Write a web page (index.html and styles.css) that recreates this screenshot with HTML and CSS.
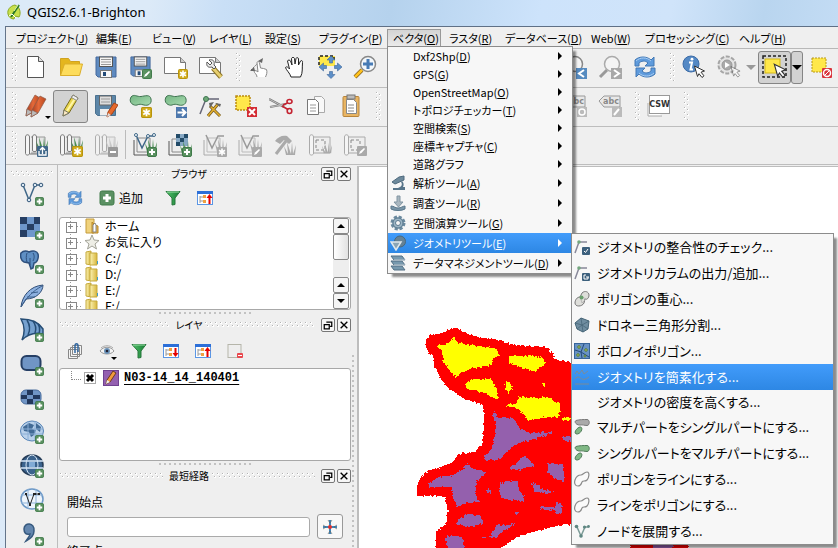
FILE: index.html
```html
<!DOCTYPE html>
<html lang="ja">
<head>
<meta charset="utf-8">
<title>QGIS2.6.1-Brighton</title>
<link rel="stylesheet" href="styles.css">
</head>
<body>
<svg class="sprite" aria-hidden="true">
  <defs>
    <linearGradient id="g-pencil" x1="0" y1="0" x2="1" y2="0"><stop offset="0" stop-color="#a2391d"/><stop offset=".5" stop-color="#e4693a"/><stop offset="1" stop-color="#b8481f"/></linearGradient>
    <linearGradient id="g-green" x1="0" y1="0" x2="1" y2="1"><stop offset="0" stop-color="#73b582"/><stop offset="1" stop-color="#a8dbb0"/></linearGradient>
    <linearGradient id="g-folder" x1="0" y1="0" x2="1" y2="0"><stop offset="0" stop-color="#fbf3b4"/><stop offset="1" stop-color="#d8b63c"/></linearGradient>
    <linearGradient id="g-funnel" x1="0" y1="0" x2="1" y2="0"><stop offset="0" stop-color="#54c46c"/><stop offset="1" stop-color="#147a32"/></linearGradient>

    <symbol id="b-plus" viewBox="0 0 10 10"><rect x=".5" y=".5" width="9" height="9" rx="1.5" fill="#5a9160" stroke="#3f7a49"/><path d="M5 2v6M2 5h6" stroke="#fff" stroke-width="2"/></symbol>
    <symbol id="b-star" viewBox="0 0 10 10"><rect x=".5" y=".5" width="9" height="9" rx="1" fill="#d2ac1c" stroke="#b8940c"/><path d="M5 1.500v7M2 3.200l6 3.600M8 3.200L2 6.800" stroke="#fff" stroke-width="1.600"/></symbol>
    <symbol id="b-star-off" viewBox="0 0 10 10"><rect width="10" height="10" rx="1" fill="#aaa"/><path d="M5 1.500v7M2 3.200l6 3.600M8 3.200L2 6.800" stroke="#fff" stroke-width="1.600"/></symbol>
    <symbol id="b-edit" viewBox="0 0 10 10"><rect x=".5" y=".5" width="9" height="9" rx="1" fill="#5a9160" stroke="#437c4c"/><path d="M2 8l1-2.500L7 2l1 1-3.500 4z" fill="#fff"/></symbol>
    <symbol id="b-edit-off" viewBox="0 0 10 10"><rect width="10" height="10" rx="1" fill="#aaa"/><path d="M2 8l1-2.500L7 2l1 1-3.500 4z" fill="#fff"/></symbol>
    <symbol id="b-minus-off" viewBox="0 0 10 10"><rect width="10" height="10" rx="1" fill="#999"/><path d="M2 5h6" stroke="#fff" stroke-width="2"/></symbol>
    <symbol id="cursor" viewBox="0 0 12 14"><path d="M1 1l10 5-3.500 1.200 3 3.600-2 1.700-3-3.800L4 11.500z" fill="#fff" stroke="#333"/></symbol>

    <symbol id="logo" viewBox="0 0 16 16"><path d="M9 1C4 2 1 6 2 10c.5 3 3 5 6 5l1-3 4 1c2-3 1-8-1-10z" fill="#c8e04c" stroke="#8caa20"/><path d="M13 1L5 13" stroke="#287828" stroke-width="2"/><path d="M12 1L8 7" stroke="#e8f8a0"/><path d="M3 12l3-2 4 4" stroke="#fff" fill="none"/></symbol>
    <symbol id="new" viewBox="0 0 24 24"><path d="M3.500 1.500h11l5 5v16h-16z" fill="#fff" stroke="#555"/><path d="M14.500 1.500v5h5" fill="#ddd" stroke="#555"/></symbol>
    <symbol id="open" viewBox="0 0 24 24"><path d="M1.500 20.500v-17h8l2 3h9v4" fill="#e4b61e" stroke="#d0a320"/><path d="M1.500 20.500l4-11.500h18l-3 11.500z" fill="#fddc5c" stroke="#dbae2a"/></symbol>
    <symbol id="save" viewBox="0 0 24 24"><path d="M2 2h20v20H4l-2-2z" fill="#5e8ac0" stroke="#45699c"/><rect x="5.500" y="2" width="13" height="9.500" fill="#f4f4f4" stroke="#555"/><path d="M7 4.500h10M7 7h10M7 9.500h10" stroke="#999"/><rect x="6.500" y="15.500" width="11" height="7" fill="#f7f7f7" stroke="#777"/><rect x="9" y="17" width="3" height="4" fill="#234b78"/></symbol>
    <symbol id="save-as" viewBox="0 0 24 24"><use href="#save" width="23" height="23"/><use href="#b-edit" x="13" y="14" width="10" height="10"/></symbol>
    <symbol id="composer" viewBox="0 0 24 24"><path d="M.5 2.500h16l5 5v11H.5z" fill="#fff" stroke="#777"/><path d="M16.500 2.500v5h5" fill="#ccc" stroke="#777"/><use href="#b-star" x="14" y="14" width="10" height="10"/></symbol>
    <symbol id="manager" viewBox="0 0 24 24"><path d="M.5 2.500h16l5 5v11H.5z" fill="#fff" stroke="#777"/><path d="M16.500 2.500v5h5" fill="#ccc" stroke="#777"/><path d="M14 13l8 9" stroke="#8a7326" stroke-width="5"/><path d="M14 13l8 9" stroke="#e7cf6f" stroke-width="3"/><path d="M8 7c-1 4 1 6 5 5l2 2 2-2-2-2c1-4-1-6-5-5l3 3-2 2z" fill="#e9e9e9" stroke="#555"/></symbol>
    <symbol id="touch" viewBox="0 0 24 24"><path d="M3 15L13 5" stroke="#777" stroke-dasharray="2 1"/><path d="M9 22c0-3-3-4-3-6 1-1 3 0 4 1L9 8c0-2 2-2 2.500 0l1 5 3 .5 3 1c1 3 0 5-1 7.500" fill="#fff" stroke="#888"/><path d="M10 6l5-3-1 5zM6 12l-4 4 5 0z" fill="#666"/></symbol>
    <symbol id="hand" viewBox="0 0 24 24"><path d="M8 22C7 18 3 15 2.500 12.500c1-1.500 3 0 4 1.500L4.500 6C5 4.500 7 5 7.500 6L9 10 8.500 3.500c.5-1.500 2.500-1.500 3 0L12 9l1-5.500c.5-1.500 2.500-1 2.500.5L15.500 10l2-4c1-1 2.500 0 2 1.500C19 12 20 18 17.500 22z" fill="#fff" stroke="#222"/></symbol>
    <symbol id="pan-select" viewBox="0 0 24 24"><path d="M1 1h16v10H1z" fill="#ffe84a"/><path d="M1 10V1h15v4" fill="none" stroke="#222" stroke-width="1.500" stroke-dasharray="3 2"/><path d="M13 1l4 4h-2.500v3h-3V5H9zM13 23.500l-4-4h2.500v-3h3v3H17zM24 12l-4.500 4v-2.500h-3v-3h3V8zM1 12l4.500-4v2.500h3v3h-3V16z" fill="#5c8fc8" stroke="#3d679a" stroke-width=".6"/></symbol>
    <symbol id="zoom-in" viewBox="0 0 24 24"><path d="M9 15l-7 7" stroke="#806020" stroke-width="4"/><path d="M9 15l-7 7" stroke="#ffc21c" stroke-width="2.500"/><circle cx="15" cy="9" r="7.500" fill="#f2f7fb" stroke="#888" stroke-width="1.500"/><path d="M15 4v10M10 9h10" stroke="#477bb5" stroke-width="3"/></symbol>
    <symbol id="zoom-last" viewBox="0 0 24 24"><circle cx="12" cy="9" r="7.500" fill="#f4f4f4" stroke="#888" stroke-width="1.500"/><path d="M13 13h11v11H13z" fill="#568bc0"/><path d="M21 15l-5 3.500 5 3.500" fill="none" stroke="#fff" stroke-width="2"/></symbol>
    <symbol id="zoom-next" viewBox="0 0 24 24"><path d="M9 15l-7 7" stroke="#999" stroke-width="3"/><circle cx="14" cy="9" r="7.500" fill="#f4f4f4" stroke="#aaa" stroke-width="1.500"/><path d="M13 13h11v11H13z" fill="#a8a8a8"/><path d="M16 15l5 3.500-5 3.500" fill="none" stroke="#fff" stroke-width="2"/></symbol>
    <symbol id="refresh" viewBox="0 0 24 24"><path d="M2 11V5c4-4 12-4 16 0l3-3v9h-9l3-3C12 5 8 6 6 8v3zM22 13v6c-4 4-12 4-16 0l-3 3v-9h9l-3 3c3 3 7 2 9 0v-3z" fill="#5f9bdc" stroke="#4278b5"/><path d="M3 6c4-4 11-4 15 0M21 18c-4 4-11 4-15 0" fill="none" stroke="#a9cdf2"/></symbol>
    <symbol id="identify" viewBox="0 0 24 24"><circle cx="9" cy="9" r="8" fill="#5489c5" stroke="#3c6ca7"/><path d="M7 7.500h3l-1.500 7H11" fill="none" stroke="#fff" stroke-width="2"/><circle cx="10" cy="4.200" r="1.400" fill="#fff"/><use href="#cursor" x="11" y="10" width="13" height="14"/></symbol>
    <symbol id="action" viewBox="0 0 24 24"><circle cx="10" cy="10" r="8.500" fill="#e4e4e4" stroke="#a5a5a5" stroke-width="2" stroke-dasharray="4 1.500"/><circle cx="10" cy="10" r="5" fill="#aaa" stroke="#999"/><path d="M8 7l5 3-5 3z" fill="#fff"/><g opacity=".5"><use href="#cursor" x="13" y="10" width="11" height="14"/></g></symbol>
    <symbol id="select" viewBox="0 0 26 24"><rect x="1" y="1" width="23" height="21" fill="none" stroke="#222" stroke-width="1.500" stroke-dasharray="3 2"/><rect x="3" y="4" width="15" height="14" fill="#ffe84a" stroke="#d4b818"/><use href="#cursor" x="10" y="8" width="16" height="16"/></symbol>
    <symbol id="deselect" viewBox="0 0 24 24"><rect x="3" y="3" width="14" height="14" fill="#ffe84a" stroke="#b79716" stroke-dasharray="2 1"/><rect x="13" y="13" width="10" height="10" rx="1" fill="#d9343c"/><circle cx="18" cy="18" r="3.500" fill="none" stroke="#fff" stroke-width="1.500"/><path d="M16 20l4-4" stroke="#fff"/></symbol>

    <symbol id="pencil-y" viewBox="0 0 24 24"><path d="M4 22l1-6L14 1l5 3-9 15z" fill="#e9d54d" stroke="#776b1c"/><path d="M8 17l9-14" stroke="#fff6a8" stroke-width="2"/><path d="M4 22l1-6 5 3z" fill="#fbe9c0" stroke="#776"/><path d="M14 1l5 3-1.500 2.500-5-3z" fill="#eee" stroke="#888"/></symbol>
    <symbol id="pencils" viewBox="0 0 24 24"><g stroke="#8d5a48" stroke-width=".7"><path d="M2 22l1-7L11 1l5 3-7 14z" fill="url(#g-pencil)"/><path d="M2 22l1-7 6 3z" fill="#bbb"/><path d="M7 23l1-7L16 2l6 3-8 14z" fill="url(#g-pencil)"/><path d="M7 23l1-7 6 3z" fill="#bbb"/></g></symbol>
    <symbol id="save-edit" viewBox="0 0 24 24"><path d="M1.500 1.500h20v20h-18l-2-2z" fill="#5c86a8" stroke="#4c7290"/><rect x="5.500" y="2" width="12" height="9" fill="#ddd" stroke="#666"/><path d="M7 5h9M7 8h9" stroke="#999"/><rect x="6" y="15" width="9" height="6.500" fill="#eee"/><path d="M13 23l1-5 6-9 4 2-6 9z" fill="#e76a2c" stroke="#a6441a"/><path d="M13 23l1-4 3 2z" fill="#ddd"/></symbol>
    <symbol id="blob" viewBox="0 0 24 24"><path d="M2 3C5-.5 8 3 12 2.500S21 0 22 5s-3 7-7 6-4-1-7 0S-1 9 2 3z" fill="url(#g-green)" stroke="#3f7350"/></symbol>
    <symbol id="add-feature" viewBox="0 0 24 24"><use href="#blob" width="24" height="24"/><use href="#b-star" x="12" y="13" width="11" height="11"/></symbol>
    <symbol id="move-feature" viewBox="0 0 24 24"><use href="#blob" width="24" height="24"/><rect x="12" y="13" width="11" height="11" fill="#4d78ad"/><path d="M13.500 18.500H21M18 15l3.500 3.500L18 22" fill="none" stroke="#fff" stroke-width="2"/></symbol>
    <symbol id="node" viewBox="0 0 24 24"><path d="M1 20L7 5h13" fill="none" stroke="#667" stroke-width="1.500"/><circle cx="7" cy="5" r="2.500" fill="#6fa878" stroke="#3d7550"/><path d="M9 22L19 10M21 22L11 12" stroke="#735a25" stroke-width="3"/><path d="M9 22L19 10M21 22L11 12" stroke="#e4b02d" stroke-width="1.500"/><path d="M10 9l5-1-4 6zM16 9l6 1-1 3z" fill="#666"/></symbol>
    <symbol id="delete" viewBox="0 0 24 24"><rect x="2" y="2" width="14" height="14" fill="#ffe84a" stroke="#bb8b10" stroke-width="1.500" stroke-dasharray="2 1"/><rect x="13" y="13" width="10" height="10" fill="#d42c34"/><path d="M15 15l6 6M21 15l-6 6" stroke="#fff" stroke-width="2"/></symbol>
    <symbol id="cut" viewBox="0 0 24 24"><path d="M0 5l15 8M1 13l16-3" stroke="#777" stroke-width="2"/><path d="M0 5l15 8M1 13l16-3" stroke="#ddd" stroke-width=".7"/><g fill="none" stroke="#c42331" stroke-width="1.600"><ellipse cx="20.500" cy="7.500" rx="2.500" ry="2"/><ellipse cx="20.500" cy="17" rx="2.300" ry="2.500"/><path d="M13 12l6 3.500M14 11l4.500-2"/></g></symbol>
    <symbol id="copy" viewBox="0 0 24 24"><path d="M10.500 2.500h7l3 3v13h-10z" fill="#f8f8f8" stroke="#aaa"/><path d="M3.500 5.500h8l3 3v12h-11z" fill="#fff" stroke="#777"/><path d="M6 11h6M6 14h6M6 17h6" stroke="#999"/></symbol>
    <symbol id="paste" viewBox="0 0 24 24"><rect x="4" y="2.500" width="16" height="20" rx="1" fill="#e8b564" stroke="#b8843a"/><path d="M7.500 5.500h7l3 3v11h-10z" fill="#fff" stroke="#888"/><path d="M9 11h6M9 14h6M9 17h6" stroke="#888"/><rect x="8" y="1" width="8" height="4" fill="#bbb" stroke="#777"/></symbol>
    <symbol id="tag" viewBox="0 0 24 24"><path d="M1 7l5-5h16v11H6z" fill="#e8e8e8" stroke="#999"/><rect x="14" y="13" width="10" height="10" fill="#bbb"/></symbol>

    <symbol id="roll" viewBox="0 0 24 24"><path d="M7 4h14v16H7" fill="#e5e5e5" stroke="#999"/><path d="M1.500 4c0-3 4-3 4 0v17c-2 2-4 1-4-1zM8.500 4c0-3 4-3 4 0v14c-2 1-4 1-4-1z" fill="#f5f5f5" stroke="#777"/><path d="M5.500 21h14" stroke="#777"/></symbol>
    <symbol id="grass" viewBox="0 0 12 14"><path d="M2 14L0 5l4 8L3 1l4 12 1-12 1 12 3-9-1 10z" fill="#498b52"/></symbol>
    <symbol id="grass-off" viewBox="0 0 12 14"><path d="M2 14L0 5l4 8L3 1l4 12 1-12 1 12 3-9-1 10z" fill="#aaa"/></symbol>
    <symbol id="map-open" viewBox="0 0 24 24"><use href="#roll" width="24" height="24"/><use href="#grass" x="12" y="3" width="12" height="14"/><rect x="13" y="13" width="11" height="11" rx="1" fill="#3f6789"/><path d="M15 18v4h7v-4M18.500 21v-6M16 17l2.500-2.500L21 17" fill="none" stroke="#fff" stroke-width="1.300"/></symbol>
    <symbol id="map-new" viewBox="0 0 24 24"><use href="#roll" width="24" height="24"/><use href="#grass" x="12" y="3" width="12" height="14"/><use href="#b-star" x="13" y="13" width="11" height="11"/></symbol>
    <symbol id="map-close" viewBox="0 0 24 24"><g opacity=".55"><use href="#roll" width="24" height="24"/><use href="#grass-off" x="12" y="3" width="12" height="14"/></g><use href="#b-minus-off" x="14" y="14" width="10" height="10"/></symbol>
    <symbol id="grass-vector" viewBox="0 0 24 24"><path d="M4 5h13v14H4z" fill="#eee" stroke="#888"/><path d="M1 7v15h14" fill="none" stroke="#555"/><path d="M3 2l6 13 6-12h6" fill="none" stroke="#3f6788" stroke-width="1.500"/><g fill="#fff" stroke="#3f6788"><circle cx="3" cy="2" r="1.500"/><circle cx="15" cy="3" r="1.500"/><circle cx="21" cy="2" r="1.500"/></g><use href="#grass" x="12" y="5" width="12" height="14"/><use href="#b-plus" x="14" y="14" width="10" height="10"/></symbol>
    <symbol id="grass-raster" viewBox="0 0 24 24"><path d="M4 6h13v13H4z" fill="#eee" stroke="#888"/><path d="M1 8v14h14" fill="none" stroke="#555"/><path d="M8 1h12v12H8z" fill="#86a8c4"/><path d="M8 1h4v4H8zM12 5h4v4h-4zM16 1h4v4h-4zM8 9h4v4H8z" fill="#234b68"/><use href="#grass" x="12" y="7" width="12" height="14"/><use href="#b-plus" x="14" y="14" width="10" height="10"/></symbol>
    <symbol id="grass-vec-off" viewBox="0 0 24 24"><path d="M4 5h13v14H4z" fill="#eee" stroke="#bbb"/><path d="M1 7v15h14" fill="none" stroke="#aaa"/><path d="M3 2l6 13 6-12h6" fill="none" stroke="#999" stroke-width="1.500"/><use href="#grass-off" x="12" y="5" width="12" height="14"/></symbol>
    <symbol id="grass-new-off" viewBox="0 0 24 24"><use href="#grass-vec-off" width="24" height="24"/><use href="#b-star-off" x="14" y="14" width="10" height="10"/></symbol>
    <symbol id="grass-edit-off" viewBox="0 0 24 24"><use href="#grass-vec-off" width="24" height="24"/><use href="#b-edit-off" x="14" y="14" width="10" height="10"/></symbol>
    <symbol id="tools-off" viewBox="0 0 24 24"><path d="M3 21L13 8" stroke="#aaa" stroke-width="3"/><path d="M2 8c3-4 7-6 12-5l5 5-3 3-5-4-4 4z" fill="#aaa"/><use href="#grass-off" x="11" y="7" width="12" height="16"/></symbol>
    <symbol id="region-off" viewBox="0 0 24 24"><path d="M5 4h17v16H5" fill="#eee" stroke="#aaa"/><path d="M1.500 4c0-3 4-3 4 0v17c-2 2-4 1-4-1z" fill="#f5f5f5" stroke="#aaa"/><path d="M8 7h9v10H8z" fill="none" stroke="#888" stroke-dasharray="3 2"/></symbol>
    <symbol id="region-view" viewBox="0 0 24 24"><use href="#region-off" width="24" height="24"/><use href="#grass-off" x="14" y="7" width="10" height="15"/></symbol>
    <symbol id="region-edit" viewBox="0 0 24 24"><use href="#region-off" width="24" height="24"/><use href="#b-edit-off" x="14" y="13" width="10" height="10"/></symbol>

    <symbol id="l-vector" viewBox="0 0 24 24"><path d="M3 3l6 15 6-15h7" fill="none" stroke="#3f6788" stroke-width="1.500"/><g fill="#dbe8f2" stroke="#34587a"><circle cx="3" cy="3" r="1.800"/><circle cx="9" cy="18" r="1.800"/><circle cx="15" cy="3" r="1.800"/><circle cx="21" cy="3" r="1.800"/></g><use href="#b-plus" x="15" y="15" width="9" height="9"/></symbol>
    <symbol id="l-raster" viewBox="0 0 24 24"><path d="M0 1h20v20H0z" fill="#6e97cb"/><path d="M0 1h7v7H0zM14 1h6v7h-6zM7 8h7v6H7zM0 14h7v7H0z" fill="#263e63"/><use href="#b-plus" x="15" y="15" width="9" height="9"/></symbol>
    <symbol id="l-postgis" viewBox="0 0 24 24"><path d="M1 3c3-3 6-2 8-1 4-2 8-1 9 2 1 4-1 9-4 9l-1 5-2 1-2-6-5-1C1 11 0 6 1 3z" fill="#5f8fc4" stroke="#2d4f7d" stroke-width="1.500"/><path d="M7 3c-1 3-1 6 0 9M13 3c2 3 1 6 0 8M10 8v7" fill="none" stroke="#2d4f7d"/><use href="#b-plus" x="15" y="15" width="9" height="9"/></symbol>
    <symbol id="l-spatialite" viewBox="0 0 24 24"><path d="M1 23C2 12 10 2 23 1c0 7-7 14-17 14z" fill="#8cb0df" stroke="#314e76"/><path d="M1 23C7 13 13 7 22 2M7 13l8 0M11 9l7-1" stroke="#3c608d" fill="none"/><use href="#b-plus" x="15" y="15" width="9" height="9"/></symbol>
    <symbol id="l-mssql" viewBox="0 0 24 24"><path d="M1 1c9 0 17 2 22 10v5c-8-2-15 0-21 6C5 15 5 8 1 1z" fill="#76a1cf" stroke="#264d75" stroke-width="1.500"/><path d="M7 2c3 5 3 11 1 15M13 3c3 4 3 9 2 12M18 6c2 3 2 6 1 9" fill="none" stroke="#264d75" stroke-width="1.500"/><use href="#b-plus" x="15" y="15" width="9" height="9"/></symbol>
    <symbol id="l-oracle" viewBox="0 0 24 24"><rect x="1.500" y="4" width="19" height="14" rx="5" fill="#7095c5" stroke="#263f65" stroke-width="2"/><use href="#b-plus" x="15" y="15" width="9" height="9"/></symbol>
    <symbol id="l-georaster" viewBox="0 0 24 24"><rect x="1" y="4" width="20" height="14" rx="5" fill="#7095c5" stroke="#496c9c"/><path d="M7 4h6v5H7zM1 9h6v4H1zM13 9h7v4h-7zM7 13h6v5H7z" fill="#22385c"/><use href="#b-plus" x="15" y="15" width="9" height="9"/></symbol>
    <symbol id="l-wms" viewBox="0 0 24 24"><ellipse cx="12" cy="11" rx="11.500" ry="10" fill="#b9d1eb" stroke="#5683b5"/><path d="M3 7l6-4 5 2-2 4 4 1-2 5-3 2-2-5-5-1zM16 3l5 4-1 5-4-3z" fill="#426b96"/><path d="M1 9h22M1 14h22M8 1v20M15 1v20" stroke="#8aaed5"/><use href="#b-plus" x="15" y="15" width="9" height="9"/></symbol>
    <symbol id="l-wcs" viewBox="0 0 24 24"><ellipse cx="12" cy="11" rx="11" ry="10" fill="#3b638d" stroke="#263d58" stroke-width="1.500"/><path d="M1 7h22M1 14h22" stroke="#d7e7f7" stroke-width="1.500"/><ellipse cx="12" cy="11" rx="6" ry="10" fill="none" stroke="#d7e7f7"/><path d="M9 8h6v5H9z" fill="#80aad5"/><use href="#b-plus" x="15" y="15" width="9" height="9"/></symbol>
    <symbol id="l-wfs" viewBox="0 0 24 24"><ellipse cx="12" cy="11" rx="11" ry="10" fill="#eef5fc" stroke="#6c98c6" stroke-width="1.500"/><path d="M1 7h22M1 15h22M8 1v20M16 1v20" stroke="#8eb2d8"/><path d="M6 6l4 11 4-11h5" fill="none" stroke="#222"/><path d="M5 5h2v2H5zM13 5h3v2h-3zM18 5h2v2h-2zM9 16h2v2H9z" fill="#222"/><use href="#b-plus" x="15" y="15" width="9" height="9"/></symbol>
    <symbol id="l-csv" viewBox="0 0 24 24"><path d="M4 7c0-7 11-7 10 2 0 5-4 8-8 10 2-3 4-5 4-7-4 1-6-1-6-5z" fill="#6386ae" stroke="#36597e" stroke-width="1.500"/><use href="#b-plus" x="15" y="15" width="9" height="9"/></symbol>

    <symbol id="add" viewBox="0 0 16 16"><rect x="1" y="1" width="14" height="14" rx="2" fill="#5b9163" stroke="#417a4b"/><path d="M8 4v8M4 8h8" stroke="#fff" stroke-width="3"/></symbol>
    <symbol id="funnel" viewBox="0 0 16 16"><path d="M1 1.500h14L10 8v6.500L7 15V8z" fill="url(#g-funnel)" stroke="#28763c"/><path d="M2 2h12" stroke="#9ae0a8"/></symbol>
    <symbol id="collapse" viewBox="0 0 16 16"><rect x=".5" y="1.500" width="15" height="13" fill="#fff" stroke="#5b96e4"/><path d="M0 1h16v3H0z" fill="#2c6fd8"/><path d="M3 6v7M3 7h3M3 11h3" stroke="#999"/><path d="M6 5h3v3H6zM6 10h3v3H6z" fill="#f0a040"/><path d="M12.500 4l3 4h-2v6h-2V8h-2z" fill="#e60000"/></symbol>
    <symbol id="expand" viewBox="0 0 16 16"><rect x=".5" y="1.500" width="15" height="13" fill="#fff" stroke="#5b96e4"/><path d="M0 1h16v3H0z" fill="#2c6fd8"/><path d="M3 6v7M3 7h3M3 11h3" stroke="#999"/><path d="M6 5h3v3H6zM6 10h3v3H6z" fill="#f0a040"/><path d="M12.500 14l3-4h-2V5h-2v5h-2z" fill="#e60000"/></symbol>
    <symbol id="group" viewBox="0 0 16 16"><path d="M5.500 2.500h9v9h-9zM3.500 4.500h9v9h-9zM1.500 6.500h9v9h-9z" fill="#f3f3f3" stroke="#888"/><path d="M8 10V3c0-3 3-3 3 0v6" fill="none" stroke="#3267a0" stroke-width="1.500"/></symbol>
    <symbol id="eye" viewBox="0 0 16 16"><path d="M1 8c3-5 11-5 14 0-3 4-11 4-14 0z" fill="#f4f4f4" stroke="#999"/><circle cx="8" cy="8" r="3" fill="#6a92b8"/><circle cx="8" cy="8" r="1.300" fill="#223"/><path d="M2 5c3-3 9-3 12 0" fill="none" stroke="#aaa"/></symbol>
    <symbol id="remove" viewBox="0 0 16 16"><rect x="1" y="1.500" width="13" height="13" fill="#eee" stroke="#b5b5aa"/><rect x="10" y="10" width="6" height="5" rx="1" fill="#e8484e"/><path d="M11 12.500h4" stroke="#fff"/></symbol>
    <symbol id="home" viewBox="0 0 16 16"><path d="M2 1h8v14H2z" fill="#f0d27c" stroke="#c49b3a"/><path d="M8 15V4l3 3 3 1v7z" fill="#e3b048" stroke="#b98a2a"/><path d="M9 14V7l2-2 1 2v7z" fill="#fff" stroke="#888"/></symbol>
    <symbol id="star" viewBox="0 0 16 16"><path d="M8 1l2 5 5 .5-4 3.500 1.500 5L8 12l-4.500 3L5 10 1 6.500 6 6z" fill="#eeeee6" stroke="#a3a398"/></symbol>
    <symbol id="folder" viewBox="0 0 16 16"><path d="M2 2l5-1v14l-5-1z" fill="url(#g-folder)" stroke="#c5a93c"/><path d="M6 3h7v12H6z" fill="url(#g-folder)" stroke="#c5a93c"/><path d="M13 11h1v3h-1z" fill="#3d9cc8"/></symbol>
    <symbol id="layer-edit" viewBox="0 0 16 16"><rect x=".5" y=".5" width="15" height="15" fill="#9460b0" stroke="#6f4290"/><path d="M3 14l1-4 6-9 3 2-6 9z" fill="#f19b3c" stroke="#6d3b20"/><path d="M3 14l1-4 3 2z" fill="#eee"/></symbol>
    <symbol id="capture" viewBox="0 0 16 16"><path d="M8 1v14M1 8h14" stroke="#3d87bb" stroke-width="2"/><path d="M6 1l2 3 2-3M6 15l2-3 2 3M1 6l3 2-3 2M15 6l-3 2 3 2" fill="none" stroke="#666" stroke-width=".7"/><circle cx="8" cy="8" r="2" fill="#e03030"/></symbol>
    <symbol id="float" viewBox="0 0 12 12"><path d="M4.500 2.500h6v5h-2M4 2.500h7" fill="none" stroke="#000" stroke-width="1.500"/><path d="M1.500 5.500h6v5h-6zM1 5.500h7" fill="none" stroke="#000" stroke-width="1.500"/></symbol>
    <symbol id="close" viewBox="0 0 12 12"><path d="M2 2l8 8M10 2l-8 8" stroke="#000" stroke-width="1.600"/></symbol>
    <symbol id="check" viewBox="0 0 12 12"><path d="M3 3l6 6M9 3l-6 6" stroke="#000" stroke-width="3"/></symbol>

    <symbol id="m-analysis" viewBox="0 0 16 16"><path d="M9 2l5-1v4L5 9 2 7z" fill="#6e8a9c" stroke="#4e6a7e"/><path d="M11 7c2 3 0 5-3 6H3v2h12v-3h-2c1-2 1-4-1-6z" fill="#58758a"/></symbol>
    <symbol id="m-research" viewBox="0 0 16 16"><path d="M7 1h3v6h3l-4.500 5L4 7h3z" fill="#a9b7c0" stroke="#8296a3"/><path d="M1 11c3 0 4 2 7 2s5-2 7-2v3c-3 2-11 2-14 0z" fill="#7a96a8" stroke="#5a788c"/></symbol>
    <symbol id="m-gear" viewBox="0 0 16 16"><circle cx="8" cy="8" r="6" fill="#9db6c5" stroke="#6b8a9f" stroke-width="3" stroke-dasharray="3 1.700"/><circle cx="8" cy="8" r="5" fill="#9db6c5" stroke="#5b7a90"/><circle cx="8" cy="8" r="2.500" fill="#f7f7f7" stroke="#5b7a90"/></symbol>
    <symbol id="m-geometry" viewBox="0 0 16 16"><circle cx="10" cy="6.500" r="5.500" fill="#658295" stroke="#48687e"/><path d="M1 7h10l-5 8z" fill="#8ba5b5" stroke="#e1e8ec" stroke-width="1.500"/></symbol>
    <symbol id="m-data" viewBox="0 0 16 16"><path d="M1 1h11l3 4H4zM1 6h11l3 4H4zM1 11h11l3 4H4z" fill="#7799ae" stroke="#526f84"/><path d="M4 5h11M4 10h11" stroke="#cbd7df"/></symbol>
    <symbol id="s-check" viewBox="0 0 16 16"><path d="M1 14L5 3h8" fill="none" stroke="#889" stroke-width="1.500"/><circle cx="5" cy="3" r="1.800" fill="#74a77e"/><rect x="8" y="8" width="8" height="8" rx="1" fill="#3c607d"/><path d="M10 12l1.500 1.500L14 10" fill="none" stroke="#fff"/></symbol>
    <symbol id="s-export" viewBox="0 0 16 16"><path d="M1 14L5 3h8" fill="none" stroke="#889" stroke-width="1.500"/><circle cx="5" cy="3" r="1.800" fill="#74a77e"/><rect x="8" y="8" width="8" height="8" rx="1" fill="#3c607d"/><path d="M12 10h-2v4h4v-2M12 12h3" fill="none" stroke="#fff"/></symbol>
    <symbol id="s-centroid" viewBox="0 0 16 16"><path d="M8 2c3-3 7-1 7 2s-2 5-4 4l-1 4c-2 4-9 4-9 0 0-3 2-6 5-6z" fill="#dededa" stroke="#777"/><path d="M6 5l6 3-4 4z" fill="none" stroke="#aaa" stroke-width=".7"/><circle cx="7.500" cy="6.500" r="2" fill="#69a06d"/></symbol>
    <symbol id="s-delaunay" viewBox="0 0 16 16"><path d="M1 6l6-5 8 3-1 8-5 3-6-3z" fill="#6f8da0" stroke="#456476"/><path d="M8 8L7 1M8 8l7-4M8 8l6 4M8 8l1 7M8 8l-5 4M8 8L1 6" stroke="#476679" stroke-width=".8"/></symbol>
    <symbol id="s-voronoi" viewBox="0 0 16 16"><rect x=".5" y=".5" width="15" height="15" fill="#6892c4" stroke="#37659a"/><path d="M1 7l6 2 3-8M7 9l1 6M7 9l8 5" fill="none" stroke="#234a7c"/><g fill="#b1cf73" stroke="#597c35"><circle cx="5" cy="4" r="1.300"/><circle cx="12" cy="7" r="1.300"/><circle cx="4" cy="12" r="1.300"/><circle cx="11" cy="13" r="1"/></g></symbol>
    <symbol id="s-simplify" viewBox="0 0 16 16"><path d="M1 5l2-3 2 3 3-4 2 4 4-3M1 10c3-4 5-1 7 0s4 0 7-2M1 15h14" fill="none" stroke="#7b8b98"/></symbol>
    <symbol id="s-multi" viewBox="0 0 16 16"><path d="M2 1.500c3-1 8-1 11-1s3 6 0 6-4-1-7-.5S-.5 3 2 1.500z" fill="#aaa" stroke="#777"/><path d="M6 8c4 0 1 7-3 7S2 9 6 8z" fill="#80b885" stroke="#507a59"/></symbol>
    <symbol id="s-single" viewBox="0 0 16 16"><path d="M2 1.500c3-1 8-1 11-1s3 6 0 6-4-1-7-.5S-.5 3 2 1.500z" fill="#80b885" stroke="#507a59"/><path d="M6 8c4 0 1 7-3 7S2 9 6 8z" fill="#80b885" stroke="#507a59"/></symbol>
    <symbol id="s-line" viewBox="0 0 16 16"><path d="M7 4c2 0 3-3 6-3s2 6 0 8-4 0-5 2-1 4-4 4-4-3-3-6 3-5 6-5z" fill="#fafafa" stroke="#8a8a8a" stroke-width="1.200"/></symbol>
    <symbol id="s-nodes" viewBox="0 0 16 16"><path d="M3 4l4 9 4-9h3" fill="none" stroke="#7b9a96" stroke-width="1.500"/><g fill="#5f8782"><circle cx="2.500" cy="3.500" r="1.800"/><circle cx="7" cy="13" r="1.800"/><circle cx="10.500" cy="4" r="1.600"/><circle cx="14.500" cy="3.500" r="1.400"/></g></symbol>
  </defs>
</svg>

<div class="desktop">
  <header class="titlebar"><svg class="icon16"><use href="#logo"/></svg><span>QGIS2.6.1-Brighton</span></header>
  <div class="window">
    <nav class="menubar">
      <button>プロジェクト(<u>J</u>)</button><button>編集(<u>E</u>)</button><button>ビュー(<u>V</u>)</button><button>レイヤ(<u>L</u>)</button><button>設定(<u>S</u>)</button><button>プラグイン(<u>P</u>)</button><button class="open">ベクタ(<u>O</u>)</button><button>ラスタ(<u>R</u>)</button><button>データベース(<u>D</u>)</button><button>Web(<u>W</u>)</button><button>プロセッシング(<u>C</u>)</button><button>ヘルプ(<u>H</u>)</button>
    </nav>

    <div class="toolrow">
      <div class="toolbar"><i class="grip"></i>
        <button class="tool" aria-label="新規"><svg><use href="#new"/></svg></button>
        <button class="tool" aria-label="開く"><svg><use href="#open"/></svg></button>
        <button class="tool" aria-label="保存"><svg><use href="#save"/></svg></button>
        <button class="tool" aria-label="別名で保存"><svg><use href="#save-as"/></svg></button>
        <button class="tool" aria-label="新規コンポーザ"><svg><use href="#composer"/></svg></button>
        <button class="tool" aria-label="コンポーザマネージャ"><svg><use href="#manager"/></svg></button>
      </div>
      <div class="toolbar"><i class="grip"></i>
        <button class="tool" aria-label="タッチズーム"><svg><use href="#touch"/></svg></button>
        <button class="tool" aria-label="パン"><svg><use href="#hand"/></svg></button>
        <button class="tool" aria-label="選択部分にパン"><svg><use href="#pan-select"/></svg></button>
        <button class="tool" aria-label="拡大"><svg><use href="#zoom-in"/></svg></button>
        <span class="covered"></span>
        <button class="tool" aria-label="直前の表示"><svg><use href="#zoom-last"/></svg></button>
        <button class="tool" aria-label="次の表示"><svg><use href="#zoom-next"/></svg></button>
        <button class="tool" aria-label="再読み込み"><svg><use href="#refresh"/></svg></button>
      </div>
      <div class="toolbar"><i class="grip"></i>
        <button class="tool" aria-label="地物情報"><svg><use href="#identify"/></svg></button>
        <button class="tool" aria-label="アクション"><svg><use href="#action"/></svg></button>
        <button class="arrow off" aria-label="アクション一覧"></button>
        <button class="tool pressed select-tool" aria-label="地物選択"><svg class="wide"><use href="#select"/></svg></button>
        <button class="arrow pressed" aria-label="選択方法"></button>
        <button class="tool" aria-label="選択解除"><svg><use href="#deselect"/></svg></button>
      </div>
    </div>

    <div class="toolrow">
      <div class="toolbar"><i class="grip"></i>
        <button class="tool more" aria-label="現在の編集"><svg><use href="#pencils"/></svg></button>
        <button class="tool pressed" aria-label="編集モード"><svg><use href="#pencil-y"/></svg></button>
        <button class="tool" aria-label="編集の保存"><svg><use href="#save-edit"/></svg></button>
        <button class="tool" aria-label="地物追加"><svg><use href="#add-feature"/></svg></button>
        <button class="tool" aria-label="地物移動"><svg><use href="#move-feature"/></svg></button>
        <button class="tool" aria-label="ノードツール"><svg><use href="#node"/></svg></button>
        <button class="tool" aria-label="選択物の削除"><svg><use href="#delete"/></svg></button>
        <button class="tool" aria-label="切り取り"><svg><use href="#cut"/></svg></button>
        <button class="tool" aria-label="コピー"><svg><use href="#copy"/></svg></button>
        <button class="tool" aria-label="貼り付け"><svg><use href="#paste"/></svg></button>
      </div>
      <div class="toolbar"><i class="grip"></i><span class="covered"></span>
        <button class="tool" aria-label="ラベル回転"><svg><use href="#tag"/><text class="tag-text" x="5" y="10">abc</text><circle cx="19" cy="18" r="3" fill="none" stroke="#fff" stroke-width="1.500"/></svg></button>
        <button class="tool" aria-label="ラベル変更"><svg><use href="#tag"/><text class="tag-text" x="5" y="10">abc</text><path d="M16 21l5-6" stroke="#fff" stroke-width="2"/></svg></button>
      </div>
      <div class="toolbar"><i class="grip"></i>
        <button class="tool" aria-label="CSW"><svg><path d="M1 9v13h14" fill="#fff" stroke="#aaa"/><rect x="2.500" y="1.500" width="20" height="18" fill="#fff" stroke="#999"/><text class="csw-text" x="12.500" y="13">CSW</text></svg></button>
      </div>
      <div class="toolbar"><i class="grip"></i></div>
    </div>

    <div class="toolrow grass">
      <div class="toolbar"><i class="grip"></i>
        <button class="tool" aria-label="マップセットを開く"><svg><use href="#map-open"/></svg></button>
        <button class="tool" aria-label="新規マップセット"><svg><use href="#map-new"/></svg></button>
        <button class="tool" aria-label="マップセットを閉じる"><svg><use href="#map-close"/></svg></button>
      </div>
      <div class="toolbar split">
        <button class="tool" aria-label="GRASSベクタ追加"><svg><use href="#grass-vector"/></svg></button>
        <button class="tool" aria-label="GRASSラスタ追加"><svg><use href="#grass-raster"/></svg></button>
        <button class="tool" aria-label="GRASSベクタ作成"><svg><use href="#grass-new-off"/></svg></button>
        <button class="tool" aria-label="GRASSベクタ編集"><svg><use href="#grass-edit-off"/></svg></button>
        <button class="tool" aria-label="GRASSツール"><svg><use href="#tools-off"/></svg></button>
        <button class="tool" aria-label="領域表示"><svg><use href="#region-view"/></svg></button>
        <button class="tool" aria-label="領域編集"><svg><use href="#region-edit"/></svg></button>
      </div>
    </div>

    <div class="main">
      <aside class="layerbar"><i class="hgrip"></i>
        <button aria-label="ベクタレイヤ追加"><svg><use href="#l-vector"/></svg></button>
        <button aria-label="ラスタレイヤ追加"><svg><use href="#l-raster"/></svg></button>
        <button aria-label="PostGISレイヤ追加"><svg><use href="#l-postgis"/></svg></button>
        <button aria-label="SpatiaLiteレイヤ追加"><svg><use href="#l-spatialite"/></svg></button>
        <button aria-label="MSSQLレイヤ追加"><svg><use href="#l-mssql"/></svg></button>
        <button aria-label="Oracleレイヤ追加"><svg><use href="#l-oracle"/></svg></button>
        <button aria-label="GeoRasterレイヤ追加"><svg><use href="#l-georaster"/></svg></button>
        <button aria-label="WMSレイヤ追加"><svg><use href="#l-wms"/></svg></button>
        <button aria-label="WCSレイヤ追加"><svg><use href="#l-wcs"/></svg></button>
        <button aria-label="WFSレイヤ追加"><svg><use href="#l-wfs"/></svg></button>
        <button aria-label="テキストレイヤ追加"><svg><use href="#l-csv"/></svg></button>
      </aside>

      <div class="docks">
        <section>
          <h2><i class="hgrip"></i>ブラウザ<i class="hgrip"></i><button aria-label="切り離す"><svg><use href="#float"/></svg></button><button aria-label="閉じる"><svg><use href="#close"/></svg></button></h2>
          <div class="docktools browser-tools">
            <button aria-label="再読み込み"><svg class="icon16"><use href="#refresh"/></svg></button>
            <button class="add"><svg class="icon16"><use href="#add"/></svg>追加</button>
            <button aria-label="フィルタ"><svg class="icon16"><use href="#funnel"/></svg></button>
            <button aria-label="全てたたむ"><svg class="icon16"><use href="#collapse"/></svg></button>
          </div>
          <div class="box tree">
            <ul>
              <li><i class="knob"></i><svg class="icon16"><use href="#home"/></svg>ホーム</li>
              <li><i class="knob"></i><svg class="icon16"><use href="#star"/></svg>お気に入り</li>
              <li><i class="knob"></i><svg class="icon16"><use href="#folder"/></svg>C:/</li>
              <li><i class="knob"></i><svg class="icon16"><use href="#folder"/></svg>D:/</li>
              <li><i class="knob"></i><svg class="icon16"><use href="#folder"/></svg>E:/</li>
              <li><i class="knob"></i><svg class="icon16"><use href="#folder"/></svg>F:/</li>
            </ul>
            <div class="scroll"><button class="up" aria-label="上へ"></button><span class="thumb"></span><span class="track"></span><button class="up" aria-label="上へ"></button><button class="down" aria-label="下へ"></button></div>
          </div>
        </section>
        <i class="splitter"></i>
        <section>
          <h2><i class="hgrip"></i>レイヤ<i class="hgrip"></i><button aria-label="切り離す"><svg><use href="#float"/></svg></button><button aria-label="閉じる"><svg><use href="#close"/></svg></button></h2>
          <div class="docktools layer-tools">
            <button aria-label="グループ追加"><svg class="icon16"><use href="#group"/></svg></button>
            <button class="more" aria-label="表示管理"><svg class="icon16"><use href="#eye"/></svg></button>
            <button aria-label="フィルタ"><svg class="icon16"><use href="#funnel"/></svg></button>
            <button aria-label="全て展開"><svg class="icon16"><use href="#expand"/></svg></button>
            <button aria-label="全てたたむ"><svg class="icon16"><use href="#collapse"/></svg></button>
            <button aria-label="削除"><svg class="icon16"><use href="#remove"/></svg></button>
          </div>
          <div class="box layers">
            <div class="layer"><i class="branch"></i><span class="tick"><input type="checkbox" id="layer1" checked><svg><use href="#check"/></svg></span><svg class="icon16"><use href="#layer-edit"/></svg><label for="layer1">N03-14_14_140401</label></div>
          </div>
        </section>
        <i class="splitter"></i>
        <section class="route">
          <h2><i class="hgrip"></i>最短経路<i class="hgrip"></i><button aria-label="切り離す"><svg><use href="#float"/></svg></button><button aria-label="閉じる"><svg><use href="#close"/></svg></button></h2>
          <div class="form">
            <label for="start">開始点</label>
            <div class="field"><input type="text" id="start"><button aria-label="開始点を指定"><svg class="icon16"><use href="#capture"/></svg></button></div>
            <span>終了点</span>
          </div>
        </section>
      </div>
      <i class="vsplitter"></i>
      <main class="map">
        <svg viewBox="359 167 479 381" role="img" aria-label="地図" shape-rendering="crispEdges">
          <filter id="rough" x="0" y="0" width="1" height="1"><feTurbulence type="fractalNoise" baseFrequency=".15" numOctaves="2" seed="4"/><feDisplacementMap in="SourceGraphic" scale="12" xChannelSelector="R" yChannelSelector="G"/></filter>
          <g transform="translate(400 310) scale(.33333)" filter="url(#rough)">
            <path fill="#f00" d="M78 88L90 75 125 70 145 60 170 52 185 62 210 75 240 82 300 90 325 100 370 108 430 110 450 120 468 150 515 157 620 170V630L515 643 470 648 430 658 390 668 350 683 300 714 240 760H108V668L140 640 143 600 135 560 52 557V525L63 500 90 480 125 470 160 455 175 432 225 425 245 405 252 360 250 285 190 265 150 240 125 210 105 170 100 140 80 125zM690 680H865V760H690z"/>
            <path fill="#ff0" d="M108 108L148 98 160 84 175 98 215 105 285 115 300 135 275 150V165L215 175 180 190 168 202 150 185 130 155 125 120zM327 137L425 140 437 158 432 168 415 172 408 185 365 172 327 158zM195 222L215 208 275 206 280 222 292 237 293 270 250 248 200 237zM317 210L340 228 325 250 316 240zM320 283H350L355 260 400 265 455 260 462 275 480 278 478 320 440 320 385 332 365 305 345 292 320 288zM427 220L437 225 430 232zM485 323L540 328V334L485 329z"/>
            <path fill="#9460ad" d="M275 310L290 303 292 320 340 325 360 355 385 368 460 367 430 380 395 390 365 395 330 415 300 448 255 452 250 440 270 425 282 395 288 340zM87 520L120 500 155 497 185 480 200 460 220 475 260 487 230 515 228 565 243 575 200 580 172 590 160 565 155 530 87 530zM325 476L350 460 372 437 390 450 405 470 380 472 360 480zM300 520L330 513 352 512 358 540 372 560 370 575 330 568 305 565 298 540zM442 457L465 462 492 462V513L470 508 445 490zM392 517L420 528 425 538 465 545 440 550 405 545zM420 589L465 591 470 580 487 578V612H470L465 600 422 598zM167 643L180 625 205 612 240 615 252 640 210 650zM228 685L270 680 290 645 345 643 315 660 290 683zM135 685L150 677 180 680 193 692 190 730H145zM488 385L500 375 525 385 500 398zM255 543L270 530 273 548zM342 608L360 604 350 614zM758 680H818V760H758z"/>
          </g>
        </svg>
      </main>
    </div>
  </div>

  <ul class="menu vector-menu">
    <li><button>Dxf2Shp(<u>D</u>)</button></li>
    <li><button>GPS(<u>G</u>)</button></li>
    <li><button>OpenStreetMap(<u>O</u>)</button></li>
    <li><button>トポロジチェッカー(<u>T</u>)</button></li>
    <li><button>空間検索(<u>S</u>)</button></li>
    <li><button>座標キャプチャ(<u>C</u>)</button></li>
    <li><button>道路グラフ</button></li>
    <li class="tall"><button><svg class="icon16"><use href="#m-analysis"/></svg>解析ツール(<u>A</u>)</button></li>
    <li class="tall"><button><svg class="icon16"><use href="#m-research"/></svg>調査ツール(<u>R</u>)</button></li>
    <li class="tall"><button><svg class="icon16"><use href="#m-gear"/></svg>空間演算ツール(<u>G</u>)</button></li>
    <li class="tall"><button class="active"><svg class="icon16"><use href="#m-geometry"/></svg>ジオメトリツール(<u>E</u>)</button></li>
    <li class="tall"><button><svg class="icon16"><use href="#m-data"/></svg>データマネジメントツール(<u>D</u>)</button></li>
  </ul>

  <ul class="menu submenu">
    <li><button><svg class="icon16"><use href="#s-check"/></svg>ジオメトリの整合性のチェック...</button></li>
    <li><button><svg class="icon16"><use href="#s-export"/></svg>ジオメトリカラムの出力/追加...</button></li>
    <li><button><svg class="icon16"><use href="#s-centroid"/></svg>ポリゴンの重心...</button></li>
    <li><button><svg class="icon16"><use href="#s-delaunay"/></svg>ドロネー三角形分割...</button></li>
    <li><button><svg class="icon16"><use href="#s-voronoi"/></svg>ボロノイポリゴン...</button></li>
    <li><button class="active"><svg class="icon16"><use href="#s-simplify"/></svg>ジオメトリを簡素化する...</button></li>
    <li class="plain"><button>ジオメトリの密度を高くする...</button></li>
    <li><button><svg class="icon16"><use href="#s-multi"/></svg>マルチパートをシングルパートにする...</button></li>
    <li><button><svg class="icon16"><use href="#s-single"/></svg>シングルパートをマルチパートにする...</button></li>
    <li><button><svg class="icon16"><use href="#s-line"/></svg>ポリゴンをラインにする...</button></li>
    <li><button><svg class="icon16"><use href="#s-line"/></svg>ラインをポリゴンにする...</button></li>
    <li><button><svg class="icon16"><use href="#s-nodes"/></svg>ノードを展開する...</button></li>
  </ul>
</div>
</body>
</html>
```
FILE: styles.css
```css
* { box-sizing: border-box; }
body {
  margin: 0;
  font: 12px/16px "Noto Sans CJK JP", "Noto Sans", sans-serif;
  font-feature-settings: "palt";
  color: #000;
}
button {
  margin: 0; padding: 0; border: 0; background: none;
  font: inherit; font-feature-settings: inherit; color: inherit; white-space: nowrap;
}
ul { list-style: none; margin: 0; padding: 0; }
svg { flex: none; display: block; }
u { text-underline-offset: 1px; }
.sprite { position: absolute; width: 0; height: 0; }
.icon16 { width: 16px; height: 16px; }

.desktop {
  position: relative; height: 100vh; overflow: hidden;
  display: flex; flex-direction: column;
  background: linear-gradient(100deg, #dceaf8 0, #dceaf8 16%, #c9dff6 24%, #b5d2ed 42%, #cde3fb 58%, #d0e4fa 72%, #b9d5ef 82%, #cfe4fa 100%);
}
.titlebar {
  flex: none; height: 26px; padding: 0 6px 2px;
  display: flex; align-items: center; gap: 5px;
  font: 13px/18px "Noto Sans", sans-serif;
}
.window {
  flex: 1; min-height: 0; margin-left: 5px;
  display: flex; flex-direction: column;
  border-top: 1px solid #5f7086; border-left: 1px solid #64758a;
  background: #efefef;
}

.menubar {
  flex: none; height: 22px; padding: 0 0 0 2px;
  display: grid; justify-content: start; align-items: end;
  grid-template-columns: 80px 56px 57px 56px 54px 76px 54px 56px 86px 54px 94px 60px;
  border-bottom: 1px solid #b8b8b8;
  font-size: 11px;
}
.menubar button { text-align: left; padding: 0 0 2px 7px; height: 19px; border: 1px solid transparent; }
.menubar .open { padding-left: 5px; border-color: #999; background: linear-gradient(#d4d4d4, #ececec); }

.toolrow {
  flex: none; height: 39px; display: flex; gap: 2px;
  padding-bottom: 2px;
  border-bottom: 1px solid #bdbdbd; overflow: hidden;
}
.toolrow.grass { height: 38px; }
.toolbar { display: flex; align-items: center; }
.grip {
  width: 6px; height: 28px; margin-left: 6px;
  background-image:
    conic-gradient(at 1px 1px, transparent 75%, #b4b4b4 0),
    conic-gradient(at 2px 2px, transparent 75%, #fff 0),
    conic-gradient(at 1px 1px, transparent 75%, #b4b4b4 0),
    conic-gradient(at 2px 2px, transparent 75%, #fff 0);
  background-size: 6px 5px;
  background-position: 0 0, 0 0, 3px 2px, 3px 2px;
}
.tool {
  position: relative; width: 35px; height: 33px;
  display: flex; align-items: center; justify-content: center;
}
.tool svg, .layerbar svg { width: 24px; height: 24px; }
.tool svg.wide { width: 26px; }
.tool.pressed, .arrow.pressed { border: 1px solid #858585; border-radius: 3px; background: #d2d2d2; }
.select-tool { width: 33px; margin-left: 2px; }
.arrow { width: 10px; height: 33px; display: flex; align-items: center; justify-content: center; }
.arrow::before { content: ""; border: 5px solid transparent; border-top-color: #000; border-bottom: 0; }
.arrow.off::before { border-top-color: #999; }
.arrow.pressed { width: 12px; }
.more { position: relative; }
.more::after {
  content: ""; position: absolute; right: 2px; bottom: 4px;
  border: 3px solid transparent; border-top-color: #000; border-bottom: 0;
}
.covered { width: 175px; }
.split { border-left: 1px solid #bbb; padding-left: 1px; margin: 3px 0; }
.tag-text { font: bold 8px "DejaVu Sans", sans-serif; fill: #888; }
.csw-text { font: bold 8px "DejaVu Sans", sans-serif; fill: #333; text-anchor: middle; }

.main { flex: 1; min-height: 0; display: flex; }
.layerbar {
  flex: none; width: 52px; padding-top: 6px; overflow: hidden;
  display: flex; flex-direction: column; align-items: center;
  border-right: 1px solid #bdbdbd;
}
.layerbar button { height: 34px; flex: none; display: flex; align-items: center; }
.layerbar .hgrip { width: 42px; flex: none; }
.hgrip {
  height: 6px;
  background-image:
    conic-gradient(at 1px 1px, transparent 75%, #b4b4b4 0),
    conic-gradient(at 2px 2px, transparent 75%, #fff 0),
    conic-gradient(at 1px 1px, transparent 75%, #b4b4b4 0),
    conic-gradient(at 2px 2px, transparent 75%, #fff 0);
  background-size: 5px 6px;
  background-position: 0 0, 0 0, 2px 3px, 2px 3px;
}

.docks { flex: none; width: 294px; padding: 0 1px; overflow: hidden; display: flex; flex-direction: column; }
.docks section { flex: none; }
.docks h2 {
  margin: 0; height: 18px; display: flex; align-items: center; gap: 2px;
  font-size: 10px; font-weight: 400;
}
.docks h2 .hgrip { flex: 1; margin: 0 4px 0 1px; }
.docks h2 button {
  width: 14px; height: 14px; display: grid; place-items: center;
  border: 1px solid #777; border-radius: 2px; background: #f6f6f6;
}
.docks h2 button svg { width: 10px; height: 10px; }
.docktools { height: 34px; display: flex; align-items: center; padding-left: 8px; }
.docktools button { display: flex; align-items: center; gap: 4px; }
.browser-tools { gap: 16px; padding-bottom: 4px; }
.browser-tools .add { margin-right: 6px; }
.layer-tools { gap: 16px; }
.layer-tools .more::after { right: -2px; bottom: -1px; }
.box { height: 93px; overflow: hidden; border: 1px solid #a8a8a8; border-radius: 3px; background: #fff; }
.tree { display: flex; }
.tree ul { flex: 1; }
.tree li { height: 16px; display: flex; align-items: center; padding-left: 6px; }
.tree li .icon16 { margin-right: 5px; }
.knob {
  position: relative; width: 18px; height: 16px;
  background:
    linear-gradient(#888, #888) 2px 8px / 5px 1px no-repeat,
    linear-gradient(#888, #888) 4px 6px / 1px 5px no-repeat,
    repeating-linear-gradient(90deg, #999 0 1px, transparent 1px 3px) 11px 8px / 6px 1px no-repeat,
    repeating-linear-gradient(#999 0 1px, transparent 1px 3px) 4px 0 / 1px 4px no-repeat;
}
.knob::before { content: ""; position: absolute; left: 0; top: 4px; width: 9px; height: 9px; border: 1px solid #888; }
.scroll { flex: none; width: 16px; margin-right: 1px; display: flex; flex-direction: column; }
.scroll button, .thumb { flex: none; height: 16px; border: 1px solid #888; border-radius: 2px; background: #f5f5f5; display: grid; place-items: center; }
.scroll .thumb { height: 26px; background: linear-gradient(90deg, #fff, #e2e2e2); }
.scroll .track { flex: 1; background: #eee; }
.up::before, .down::before { content: ""; border: 4px solid transparent; }
.up::before { border-bottom-color: #000; border-top: 0; }
.down::before { border-top-color: #000; border-bottom: 0; }
.splitter, .vsplitter {
  background-image:
    conic-gradient(at 2px 2px, transparent 75%, #c2c2c2 0);
  background-size: 5px 5px;
}
.splitter { flex: none; width: 92px; height: 2px; margin: 2px auto 2px; }
.layer { height: 18px; display: flex; align-items: center; padding-left: 11px; }
.branch { width: 10px; height: 9px; margin: 0 3px 6px 0; border-left: 1px dotted #888; border-bottom: 1px dotted #888; }
.tick { display: grid; margin-right: 7px; }
.tick > * { grid-area: 1 / 1; width: 12px; height: 12px; pointer-events: none; }
.tick input { appearance: none; margin: 0; border: 1px solid #aaa; background: #fff; pointer-events: auto; }
.layer label { margin-left: 5px; font: bold 12px/16px "Liberation Mono", monospace; text-decoration: underline; text-underline-offset: 3px; }
.form { padding: 9px 8px 0; display: flex; flex-direction: column; gap: 4px; }
.field { display: flex; align-items: center; gap: 7px; }
.field input { flex: 1; min-width: 0; height: 20px; border: 1px solid #aaa; border-radius: 3px; background: #fff; }
.field button { width: 26px; height: 25px; display: grid; place-items: center; border: 1px solid #999; border-radius: 3px; background: #f8f8f8; }
.vsplitter { flex: none; width: 2px; margin: 190px 3px 0 0; }
.map { flex: 1; min-width: 0; margin-top: 1px; overflow: hidden; background: #fff; border-left: 2px solid #bdbdbd; border-top: 1px solid #bdbdbd; }
.map svg { width: 479px; height: 381px; }

.menu {
  position: absolute; border: 1px solid #8c8c8c; background: #f7f7f7;
  box-shadow: 4px 4px 2px -1px rgba(0, 0, 0, .45);
}
.menu button { position: relative; width: 100%; height: 100%; padding: 0 0 1px 25px; display: flex; align-items: center; text-align: left; }
.menu .icon16 { position: absolute; left: 2px; }
.menu .active { color: #fff; background: linear-gradient(#429cfb, #2d87e4); }
.vector-menu { left: 387px; top: 46px; width: 186px; font-size: 11px; }
.vector-menu li { height: 18px; }
.vector-menu .tall { height: 20px; }
.vector-menu button::after {
  content: ""; position: absolute; right: 10px;
  border: 4px solid transparent; border-left-color: currentColor; border-right: 0;
}
.submenu { left: 571px; top: 233px; width: 263px; font-size: 13px; }
.submenu li { height: 26px; }
.submenu .plain { height: 24px; }
```
